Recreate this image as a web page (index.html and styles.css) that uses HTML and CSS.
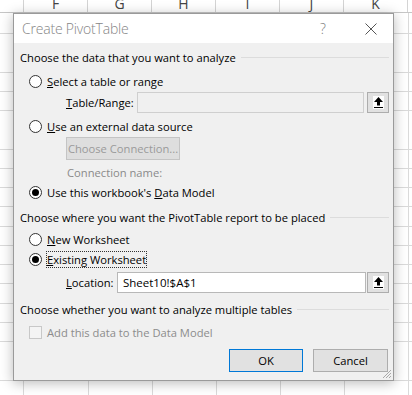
FILE: index.html
```html
<!DOCTYPE html>
<html lang="en">
<head>
  <meta charset="UTF-8">
  <title>Create PivotTable</title>
  <link rel="stylesheet" href="styles.css">
</head>
<body>
  <div class="sheet">
    <!-- Column headers, scrolled so only the lower part shows -->
    <div class="col-heads">
      <div class="col-head first"></div>
      <div class="col-head">F</div>
      <div class="col-head">G</div>
      <div class="col-head">H</div>
      <div class="col-head">I</div>
      <div class="col-head">J</div>
      <div class="col-head">K</div>
    </div>
    <div class="cells"></div>

    <!-- Dialog window over the sheet -->
    <div class="dialog">
      <div class="title-bar">
        <span class="title">Create PivotTable</span>
        <span class="help">?</span>
        <svg class="close" width="12" height="12" viewBox="0 0 12 12">
          <path d="M0.5 0.5 L11.5 11.5 M11.5 0.5 L0.5 11.5" stroke="#555" stroke-width="1" fill="none"/>
        </svg>
      </div>

      <div class="dialog-body">
        <div class="heading h-first">Choose the data that you want to analyze</div>

        <label class="option o-range">
          <span class="radio"></span>
          <span><u>S</u>elect a table or range</span>
        </label>

        <div class="field f-range">
          <span class="field-label w-range"><u>T</u>able/Range:</span>
          <span class="input disabled"></span>
          <span class="pick-btn"><svg width="11" height="13" viewBox="0 0 11 13"><path d="M5.5 1 L10 6 L7 6 L7 9.5 L4 9.5 L4 6 L1 6 Z" fill="#000"/><rect x="1" y="11" width="9" height="1" fill="#000"/></svg></span>
        </div>

        <label class="option o-external">
          <span class="radio"></span>
          <span><u>U</u>se an external data source</span>
        </label>

        <div class="conn-row">
          <span class="btn conn-btn">Choose Connection...</span>
        </div>

        <div class="conn-name">Connection name:</div>

        <label class="option o-model">
          <span class="radio checked"></span>
          <span>Use this workbook's <u>D</u>ata Model</span>
        </label>

        <div class="heading h-place">Choose where you want the PivotTable report to be placed</div>

        <label class="option o-new">
          <span class="radio"></span>
          <span><u>N</u>ew Worksheet</span>
        </label>

        <label class="option o-existing">
          <span class="radio checked"></span>
          <span class="focused"><u>E</u>xisting Worksheet</span>
        </label>

        <div class="field f-location">
          <span class="field-label w-location"><u>L</u>ocation:</span>
          <span class="input">Sheet10!$A$1</span>
          <span class="pick-btn"><svg width="11" height="13" viewBox="0 0 11 13"><path d="M5.5 1 L10 6 L7 6 L7 9.5 L4 9.5 L4 6 L1 6 Z" fill="#000"/><rect x="1" y="11" width="9" height="1" fill="#000"/></svg></span>
        </div>

        <div class="heading h-multi">Choose whether you want to analyze multiple tables</div>

        <label class="option o-check">
          <span class="checkbox"></span>
          <span class="muted">Add this data to the Data Model</span>
        </label>

        <div class="actions">
          <span class="btn default">OK</span>
          <span class="btn">Cancel</span>
        </div>
      </div>

      <svg class="grip" width="10" height="10" viewBox="0 0 10 10">
        <path d="M9 1 L1 9 M9 4 L4 9 M9 7 L7 9" stroke="#a8a8a8" stroke-width="1" fill="none"/>
      </svg>
    </div>
  </div>
</body>
</html>
```

FILE: styles.css
```css
* {
  margin: 0;
  padding: 0;
  box-sizing: border-box;
}
body {
  font-family: 'Open Sans', 'Noto Sans', sans-serif;
  font-size: 11.2px;
  color: #000;
  background: #fff;
  overflow: hidden;
}
.sheet {
  position: relative;
  width: 412px;
  height: 395px;
  overflow: hidden;
}
.col-heads {
  display: flex;
  height: 13px;
  border-bottom: 1px solid #c6c6c6;
  overflow: hidden;
}
.col-head {
  flex: 0 0 64px;
  border-right: 1px solid #d4d4d4;
  text-align: center;
  font-size: 14px;
  line-height: 14px;
  margin-top: -3px;
  color: #444;
}
.col-head.first {
  flex-basis: 24px;
}
.cells {
  height: 382px;
  background:
    linear-gradient(to right, transparent 23px, #dadada 23px, #dadada 24px, transparent 24px),
    repeating-linear-gradient(to right, transparent 0, transparent 63px, #dadada 63px, #dadada 64px),
    repeating-linear-gradient(to bottom, transparent 0, transparent 18.25px, #dadada 18.25px, #dadada 19.25px);
  background-position: 0 0, 25px 0, 0 2px;
}

/* Dialog */
.dialog {
  position: absolute;
  left: 13px;
  top: 13px;
  width: 381px;
  height: 368px;
  border: 1px solid #9a9a9a;
  background: #f0f0f0;
  box-shadow: 0 2px 12px rgba(0, 0, 0, 0.28);
  display: flex;
  flex-direction: column;
}
.title-bar {
  height: 29px;
  background: #fff;
  display: flex;
  align-items: center;
  padding-left: 8px;
  flex-shrink: 0;
}
.title {
  flex: 1;
  font-size: 14px;
  font-weight: 300;
  color: #858585;
  letter-spacing: -0.2px;
}
.help {
  font-size: 14px;
  font-weight: 300;
  color: #808080;
  margin-right: 39px;
}
.close {
  margin-right: 16px;
}
.dialog-body {
  padding: 0 4px 0 6px;
  display: flex;
  flex-direction: column;
}
.heading {
  display: flex;
  align-items: center;
  height: 16px;
  gap: 5px;
  white-space: nowrap;
}
.heading::after {
  content: '';
  flex: 1;
  border-top: 1px solid #dcdcdc;
}
.h-first { margin-top: 6px; }
.h-place { margin-top: 9px; }
.h-multi { margin-top: 8px; }

.option {
  display: flex;
  align-items: center;
  height: 16px;
  padding-left: 9px;
  gap: 5px;
}
.o-range { margin-top: 8px; }
.o-external { margin-top: 5px; }
.o-model { margin-top: 3px; }
.o-new { margin-top: 6px; }
.o-existing { margin-top: 4px; }
.o-check { margin-top: 7px; }

.radio {
  width: 13px;
  height: 13px;
  border: 1px solid #333;
  border-radius: 50%;
  background: #fff;
  display: flex;
  align-items: center;
  justify-content: center;
  flex-shrink: 0;
}
.radio.checked::after {
  content: '';
  width: 7px;
  height: 7px;
  border-radius: 50%;
  background: #000;
}
.checkbox {
  width: 13px;
  height: 13px;
  border: 1px solid #c8c8c8;
  background: #f4f4f4;
  flex-shrink: 0;
}
.muted {
  color: #8c8c8c;
}
.focused {
  outline: 1px dotted #333;
  outline-offset: 0;
  line-height: 15px;
}

.field {
  display: flex;
  align-items: center;
  height: 21px;
  padding-left: 46px;
}
.f-range { margin-top: 3px; gap: 3px; }
.f-location { margin-top: 5px; gap: 1px; }
.field-label {
  flex-shrink: 0;
}
.w-range { width: 68px; }
.w-location { width: 50px; }
.input {
  flex: 1;
  height: 21px;
  border: 1px solid #b8b8b8;
  background: #fff;
  padding-left: 5px;
  line-height: 19px;
  font-size: 11.5px;
}
.input.disabled {
  background: #f0f0f0;
  border-color: #cfcfcf;
}
.pick-btn {
  width: 22px;
  height: 21px;
  border: 1px solid #adadad;
  background: #e1e1e1;
  display: flex;
  align-items: center;
  justify-content: center;
  flex-shrink: 0;
}
.pick-btn svg {
  background: #fdfdfd;
}

.conn-row {
  margin-top: 3px;
  padding-left: 46px;
  display: flex;
}
.btn {
  display: flex;
  align-items: center;
  justify-content: center;
  height: 23px;
  border: 1px solid #adadad;
  background: #e1e1e1;
  width: 75px;
}
.conn-btn {
  width: 114px;
  background: #dedede;
  border-color: #c4c4c4;
  color: #9a9a9a;
}
.conn-name {
  margin-top: 5px;
  height: 16px;
  line-height: 16px;
  padding-left: 47px;
  color: #8a8a8a;
}

.actions {
  display: flex;
  justify-content: flex-end;
  gap: 10px;
  margin-top: 9px;
  padding-right: 1px;
}
.btn.default {
  width: 74px;
  border-color: #0078d7;
}
.grip {
  position: absolute;
  right: 1px;
  bottom: 1px;
}
```
